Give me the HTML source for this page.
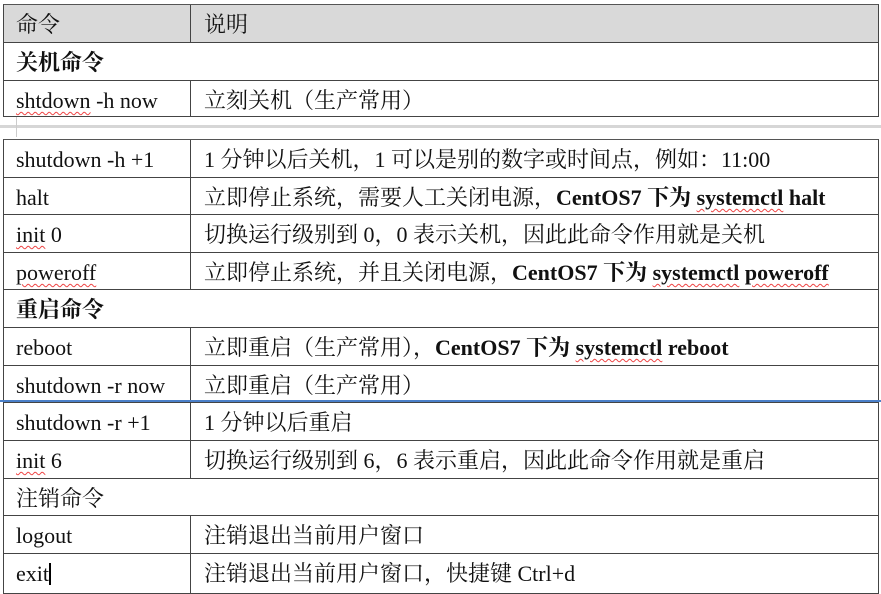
<!DOCTYPE html><html><head><meta charset="utf-8"><style>
body{margin:0;width:881px;height:592px;background:#fff;position:relative;overflow:hidden;font-family:"Liberation Serif","Noto Serif CJK SC",serif;font-size:22px;color:#111}
.r{position:absolute;left:3px;width:876px;border:1px solid #444;border-top:none;box-sizing:border-box}
.c1,.c2{position:absolute;top:3px;bottom:0;line-height:34px;white-space:nowrap}
.c1{left:12px}
.c2{left:186px;top:0;padding-top:3px;padding-left:13px;border-left:1px solid #444;right:0}
b{font-weight:bold}
.u{text-decoration:underline wavy #e44;text-decoration-thickness:1px;text-underline-offset:3px}
</style></head><body>
<div class="r" style="top:4px;height:39px;border-top:1px solid #555;background:#d9d9d9"><div class="c1">命令</div><div class="c2">说明</div></div>
<div class="r" style="top:43px;height:38px"><div class="c1"><b>关机命令</b></div></div>
<div class="r" style="top:81px;height:36px"><div class="c1"><span class="u">shtdown</span>&nbsp;-h now</div><div class="c2">立刻关机（生产常用）</div></div>
<div style="position:absolute;left:0;top:125px;width:881px;height:3px;background:#d6d6d6"></div>
<div style="position:absolute;left:16px;top:117px;width:1px;height:20px;background:#ccc"></div>
<div class="r" style="top:139px;height:39px;border-top:1px solid #555"><div class="c1">shutdown -h +1</div><div class="c2">1 分钟以后关机，1 可以是别的数字或时间点，例如：11:00</div></div>
<div class="r" style="top:178px;height:37px"><div class="c1">halt</div><div class="c2">立即停止系统，需要人工关闭电源，<b>CentOS7 下为 <span class="u">systemctl</span> halt</b></div></div>
<div class="r" style="top:215px;height:38px"><div class="c1"><span class="u">init</span>&nbsp;0</div><div class="c2">切换运行级别到 0，0 表示关机，因此此命令作用就是关机</div></div>
<div class="r" style="top:253px;height:37px"><div class="c1"><span class="u">poweroff</span></div><div class="c2">立即停止系统，并且关闭电源，<b>CentOS7 下为 <span class="u">systemctl</span> <span class="u">poweroff</span></b></div></div>
<div class="r" style="top:290px;height:38px"><div class="c1"><b>重启命令</b></div></div>
<div class="r" style="top:328px;height:38px"><div class="c1">reboot</div><div class="c2">立即重启（生产常用），<b>CentOS7 下为 <span class="u">systemctl</span> reboot</b></div></div>
<div class="r" style="top:366px;height:37px"><div class="c1">shutdown -r now</div><div class="c2">立即重启（生产常用）</div></div>
<div style="position:absolute;left:0;top:400px;width:881px;height:2px;background:#4a7fc8"></div>
<div class="r" style="top:403px;height:38px"><div class="c1">shutdown -r +1</div><div class="c2">1 分钟以后重启</div></div>
<div class="r" style="top:441px;height:38px"><div class="c1"><span class="u">init</span>&nbsp;6</div><div class="c2">切换运行级别到 6，6 表示重启，因此此命令作用就是重启</div></div>
<div class="r" style="top:479px;height:37px"><div class="c1">注销命令</div></div>
<div class="r" style="top:516px;height:38px"><div class="c1">logout</div><div class="c2">注销退出当前用户窗口</div></div>
<div class="r" style="top:554px;height:40px"><div class="c1">exit<span style="display:inline-block;width:2px;height:22px;background:#000;vertical-align:-4px"></span></div><div class="c2">注销退出当前用户窗口，快捷键 Ctrl+d</div></div>
</body></html>
